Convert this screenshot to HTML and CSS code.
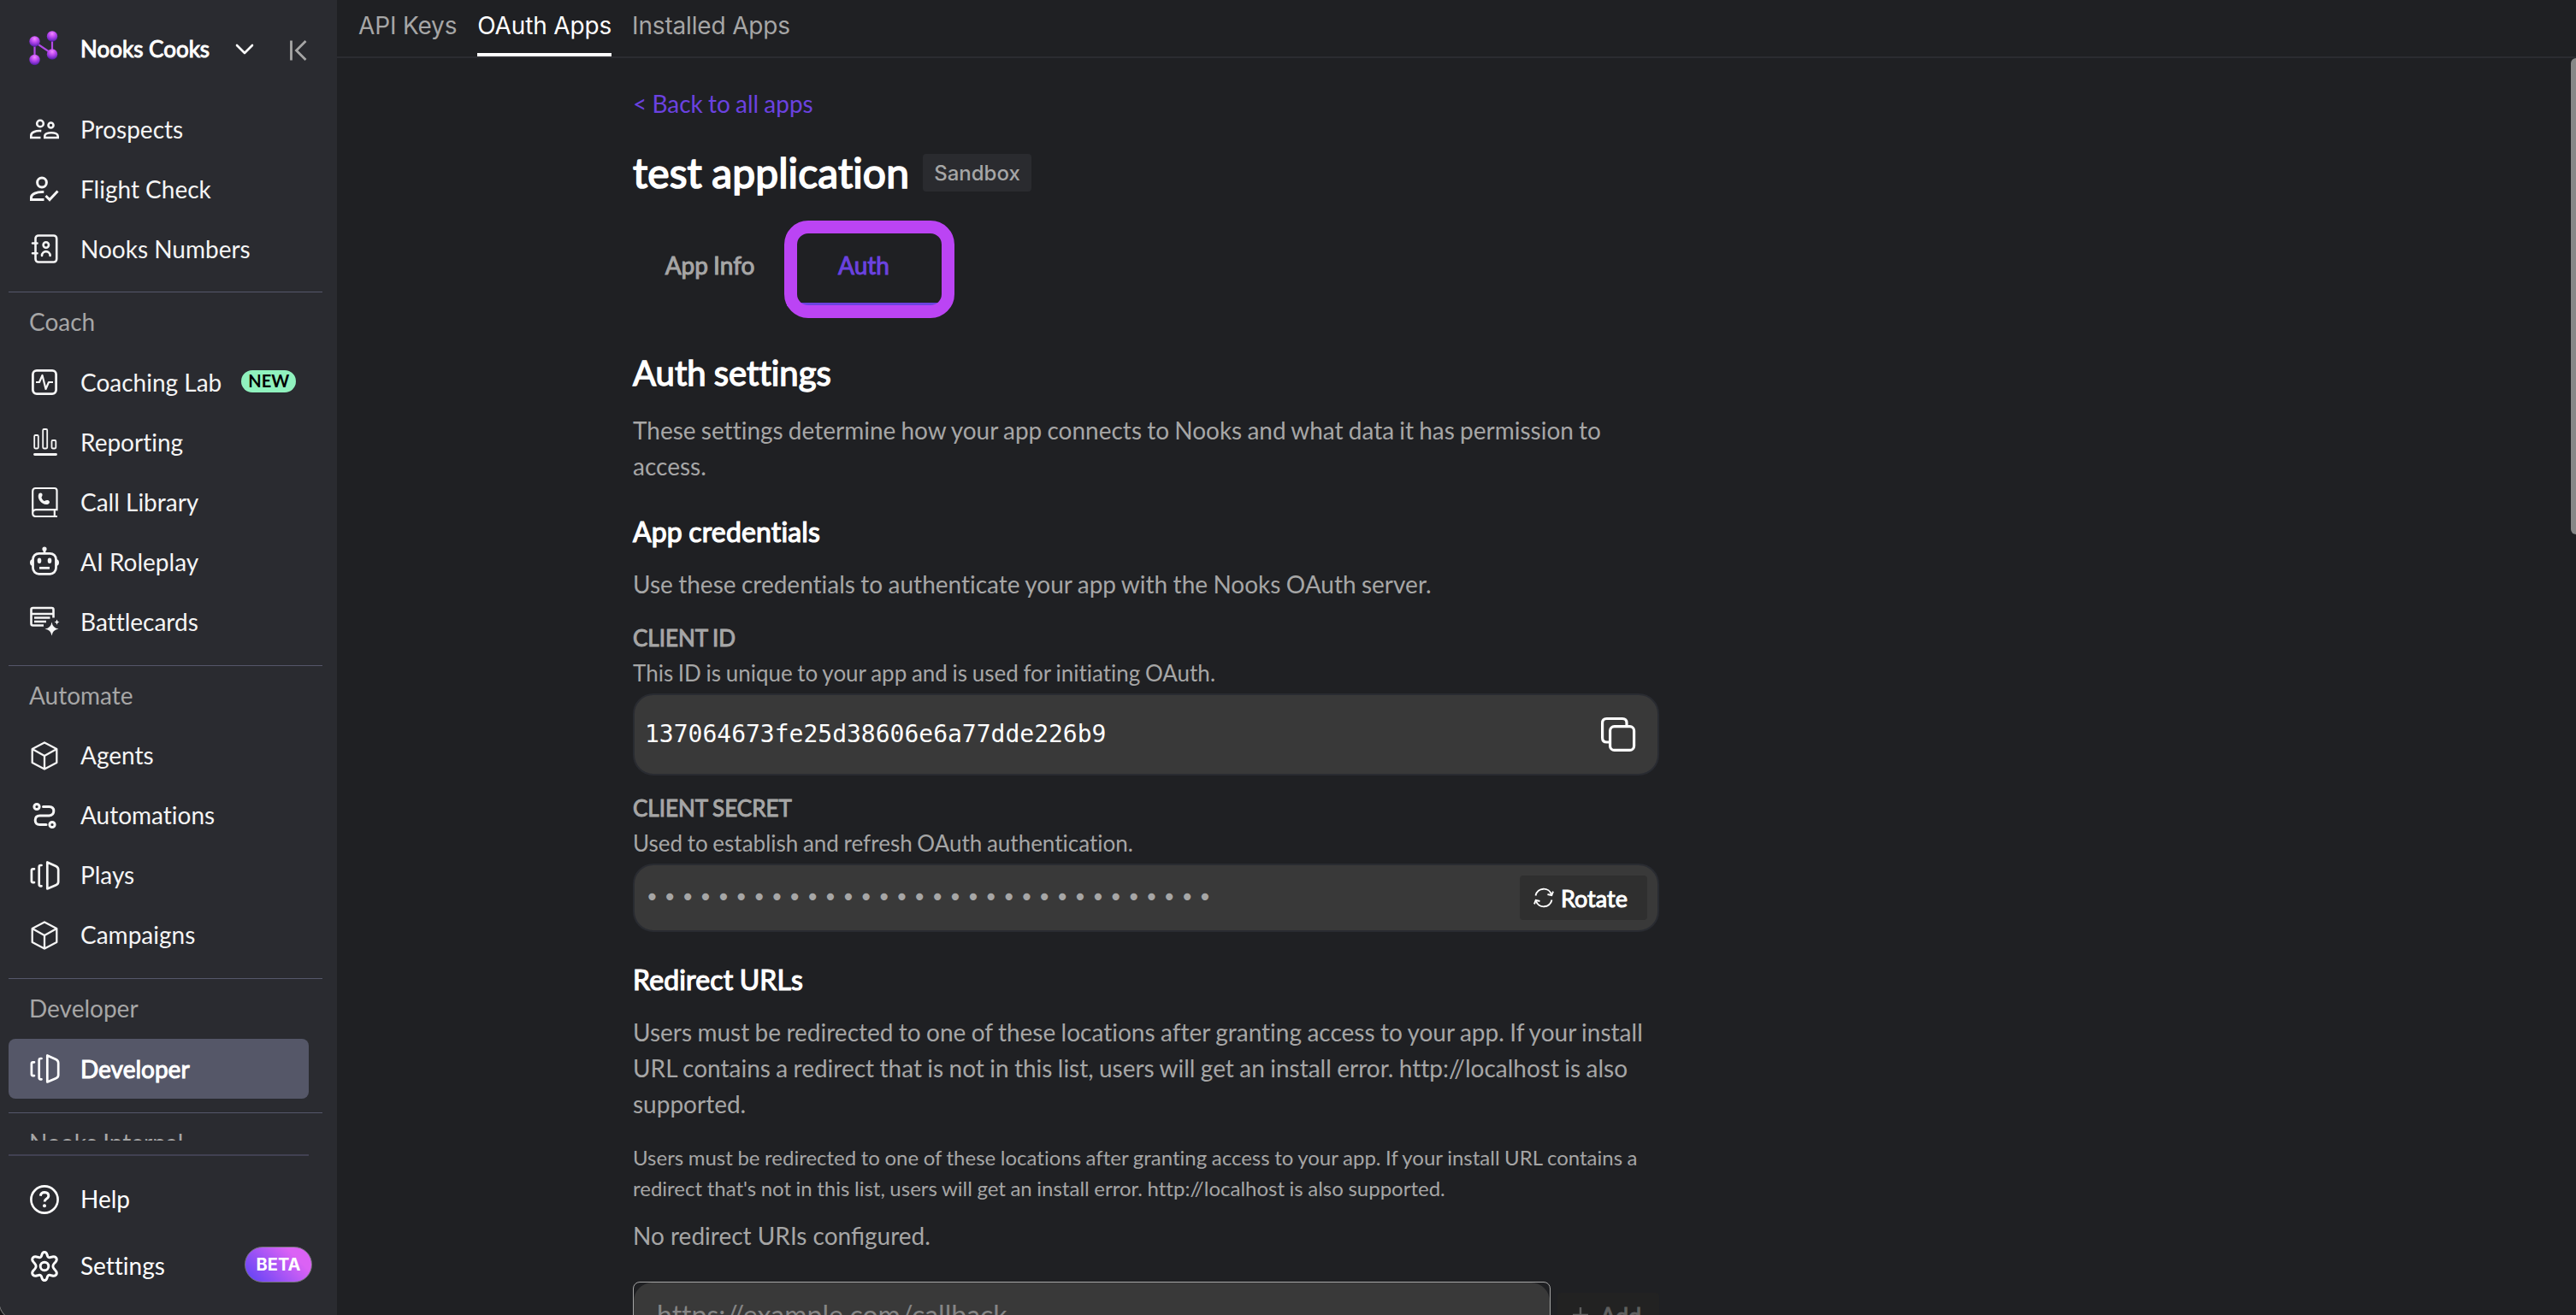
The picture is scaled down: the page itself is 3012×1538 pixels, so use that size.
FILE: index.html
```html
<!DOCTYPE html>
<html lang="en">
<head>
<meta charset="utf-8">
<title>Nooks – Developer</title>
<link rel="stylesheet" href="styles.css">
</head>
<body>
<svg width="0" height="0" class="defs" aria-hidden="true">
  <defs>
    <radialGradient id="ball" cx="0.5" cy="0.25" r="0.8">
      <stop offset="0" stop-color="#f08cff"/><stop offset="0.35" stop-color="#c650f4"/><stop offset="0.75" stop-color="#7a2cc8"/><stop offset="1" stop-color="#3a1580"/>
    </radialGradient>
    <symbol id="cube" viewBox="0 0 36 36"><path d="M18 2.500 32.300 10v16L18 33.500 3.700 26V10zM3.700 10 18 18l14.300-8M18 18v15.500" fill="none" stroke="currentColor" stroke-width="2.300" stroke-linejoin="round"/></symbol>
    <symbol id="plays" viewBox="0 0 36 36"><g fill="none" stroke="currentColor" stroke-width="2.700" stroke-linecap="round" stroke-linejoin="round"><path d="M21.300 2.500v31l10-4.300q2.900-1.200 2.900-4V11.200q0-2.800-2.900-4.200z"/><path d="M14.500 6h-1q-1.800 0-1.800 2v20.300q0 2 1.800 2h1M6 10.300H4.500q-1.600 0-1.600 1.800v12.200q0 1.800 1.600 1.800H6"/></g></symbol>
  </defs>
</svg>
<div class="app">
  <aside class="sidebar">
    <header class="brand">
      <svg class="logo" width="36" height="42" viewBox="0 0 36 42"><path d="M7.500 34V13L28 27V6" fill="none" stroke="#b14be6" stroke-width="2.200"/><circle cx="7.500" cy="12.500" r="6.200" fill="url(#ball)"/><circle cx="28" cy="6.500" r="6.200" fill="url(#ball)"/><circle cx="28" cy="27.500" r="6.200" fill="url(#ball)"/><circle cx="7.500" cy="34" r="6.200" fill="url(#ball)"/></svg>
      <span class="brand-name strong">Nooks Cooks</span>
      <svg class="chevron" width="24" height="16" viewBox="0 0 24 16"><path d="M3 3l9 9 9-9" fill="none" stroke="#fff" stroke-width="2.600" stroke-linecap="round" stroke-linejoin="round"/></svg>
      <svg class="collapse" width="22" height="26" viewBox="0 0 22 26"><path d="M3.500 1.500v23M20.500 2 9.500 13l11 11" fill="none" stroke="#a6a6a6" stroke-width="2.800"/></svg>
    </header>

    <nav class="nav">
      <a class="item"><svg class="icon" viewBox="0 0 36 36"><g fill="none" stroke="currentColor" stroke-width="2.600"><circle cx="13" cy="11.500" r="3.800"/><circle cx="25.500" cy="13.500" r="3"/><path d="M13.500 28H2.300v-2.500c0-3.500 5-6 12-5.400M18.300 28v-1.800c0-2.600 3.800-4 7.700-4s7.700 1.400 7.700 4V28z"/></g></svg>Prospects</a>
      <a class="item"><svg class="icon" viewBox="0 0 36 36"><g fill="none" stroke="currentColor" stroke-width="3"><circle cx="15" cy="10.500" r="5.400"/><path d="M17.500 30.500h-15v-2.500c0-4 6-6.800 14.800-6.400M19.500 26l4.500 4.500 9.500-10"/></g></svg>Flight Check</a>
      <a class="item"><svg class="icon" viewBox="0 0 36 36"><g fill="none" stroke="currentColor" stroke-width="2.600" stroke-linecap="round"><rect x="7.500" y="2.500" width="24.700" height="31" rx="3.500"/><path d="M4 11.500h5.500M4 23.300h5.500"/><circle cx="19.800" cy="13.500" r="3.200"/><path d="M15 26c0-6.500 9.600-6.500 9.600 0"/></g></svg>Nooks Numbers</a>
    </nav>

    <h3 class="group">Coach</h3>
    <nav class="nav">
      <a class="item"><svg class="icon" viewBox="0 0 36 36"><g fill="none" stroke="currentColor" stroke-width="2.800" stroke-linejoin="round"><rect x="4.400" y="4.400" width="27.200" height="27.200" rx="4.500"/><path stroke-width="2.200" d="M8 18h4l3.500-8 4 16 3.500-8h5"/></g></svg>Coaching Lab<span class="new strong">NEW</span></a>
      <a class="item"><svg class="icon" viewBox="0 0 36 36"><g fill="none" stroke="currentColor" stroke-width="1.800"><rect x="6.200" y="10" width="4.600" height="15.500" rx="1.200"/><rect x="16.200" y="3" width="5" height="22.500" rx="1.200"/><rect x="26.500" y="16" width="4.800" height="9.500" rx="1.200"/><path d="M6.500 32.500h25" stroke-width="2.800" stroke-linecap="round"/></g></svg>Reporting</a>
      <a class="item"><svg class="icon" viewBox="0 0 36 36"><g fill="none" stroke="currentColor" stroke-width="2.200"><path d="M4.200 31V5.500q0-3.500 3.500-3.500h22q2.800 0 2.800 2.800v22.400H8q-3.800.2-3.800 4t3.800 3.800h25M29.800 27v7"/></g><path d="M11.500 8.200c1.200-1.200 3-1 3.800.4.600 1.400.2 2.800-.8 3.800.3 2.200 1.700 3.900 3.600 4.600 1.300-1 3.100-1.500 4.600-.7 1.800 1 1.700 3-.1 4.100-5.800 2.900-14.600-5.800-11.100-12.200z" fill="currentColor"/></svg>Call Library</a>
      <a class="item"><svg class="icon" viewBox="0 0 36 36"><g fill="none" stroke="currentColor" stroke-width="2.800"><rect x="4.500" y="8.300" width="27" height="24" rx="7"/><path d="M18 8V4"/><path d="M12 25.300h12"/></g><g fill="currentColor"><circle cx="18" cy="3" r="2.600"/><ellipse cx="12" cy="16.800" rx="2.300" ry="3.200"/><ellipse cx="24" cy="16.800" rx="2.300" ry="3.200"/><path d="M4 15v8q-3-.6-3-4t3-4zM32 15v8q3-.6 3-4t-3-4z"/></g></svg>AI Roleplay</a>
      <a class="item"><svg class="icon" viewBox="0 0 36 36"><g fill="none" stroke="currentColor" stroke-width="2.600"><path d="M17 22.500H4.500q-2 0-2-2V4q0-2 2-2h22q2 0 2 2v9.500"/><path d="M2.500 9h26M6 13.500h18.500M6 18h14"/></g><path d="M26.500 18.500q1 7 8 8-7 1-8 8-1-7-8-8 7-1 8-8zM32.500 15.500q.4 2.700 3 3.100-2.600.4-3 3.100-.4-2.700-3-3.100 2.600-.4 3-3.100z" fill="currentColor"/></svg>Battlecards</a>
    </nav>

    <h3 class="group">Automate</h3>
    <nav class="nav">
      <a class="item"><svg class="icon"><use href="#cube"/></svg>Agents</a>
      <a class="item"><svg class="icon" viewBox="0 0 36 36"><g fill="none" stroke="currentColor" stroke-width="3" stroke-linecap="round"><circle cx="9" cy="7.500" r="3.100"/><circle cx="27" cy="28.500" r="3.100"/><path d="M16.500 7.500h7q5.300 0 5.300 5t-5.300 5.500H12.500q-5.300 0-5.300 5.300t5.300 5.200H20"/></g></svg>Automations</a>
      <a class="item"><svg class="icon"><use href="#plays"/></svg>Plays</a>
      <a class="item"><svg class="icon"><use href="#cube"/></svg>Campaigns</a>
    </nav>

    <h3 class="group">Developer</h3>
    <nav class="nav">
      <a class="item active strong"><svg class="icon"><use href="#plays"/></svg>Developer</a>
    </nav>

    <div class="clipped"><h3 class="group">Nooks Internal</h3></div>

    <footer class="side-footer">
      <a class="item help"><svg class="icon" viewBox="0 0 36 36"><circle cx="18" cy="18" r="15.600" fill="none" stroke="currentColor" stroke-width="2.600"/><path d="M13.300 13.800q.6-4.300 4.900-4.300 4.600.2 4.600 4 0 2.300-2.600 3.700-2 1.300-2 3.300" fill="none" stroke="currentColor" stroke-width="2.900"/><circle cx="18" cy="25.200" r="2" fill="currentColor"/></svg>Help</a>
      <a class="item settings"><svg class="icon gear" viewBox="0 0 36 40"><path d="M18 3.500q2.600 0 3.200 3.500l.6 1.600q.8 1.400 2.600 1.100l2.600-.7q3.200-1 4.700 1.100 1.500 2.400-.7 4.800l-1.800 2q-1.300 1.400-1.300 3.100t1.300 3.100l1.800 2q2.200 2.400.7 4.800-1.500 2.100-4.700 1.100l-2.600-.7q-1.800-.3-2.600 1.100l-.6 1.600q-.6 3.500-3.200 3.500t-3.200-3.500l-.6-1.600q-.8-1.400-2.600-1.100l-2.600.7q-3.200 1-4.700-1.100-1.500-2.400.7-4.800l1.800-2q1.300-1.400 1.300-3.100t-1.300-3.100l-1.800-2q-2.200-2.400-.7-4.800 1.500-2.100 4.700-1.100l2.600.7q1.800.3 2.600-1.100l.6-1.600q.6-3.500 3.200-3.500z" fill="none" stroke="currentColor" stroke-width="2.900"/><circle cx="18" cy="20" r="4.800" fill="none" stroke="currentColor" stroke-width="2.900"/></svg>Settings<span class="beta">BETA</span></a>
    </footer>
  </aside>

  <main class="main">
    <nav class="tabs">
      <a class="tab">API Keys</a>
      <a class="tab selected">OAuth Apps</a>
      <a class="tab">Installed Apps</a>
    </nav>
    <div class="scroller">
      <div class="thumb"></div>
      <section class="content">
        <a class="back">&lt; Back to all apps</a>
        <div class="title-row"><h1>test application</h1><span class="chip">Sandbox</span></div>
        <div class="subtabs">
          <a class="subtab strong">App Info</a>
          <a class="subtab strong on">Auth<span class="marker"></span></a>
        </div>
        <h2>Auth settings</h2>
        <p class="lead">These settings determine how your app connects to Nooks and what data it has permission to access.</p>
        <h4>App credentials</h4>
        <p class="text">Use these credentials to authenticate your app with the Nooks OAuth server.</p>
        <div class="label strong">CLIENT ID</div>
        <p class="hint">This ID is unique to your app and is used for initiating OAuth.</p>
        <div class="field id-field">
          <code>137064673fe25d38606e6a77dde226b9</code>
          <svg width="42" height="42" viewBox="0 0 42 42"><g fill="none" stroke="#fff" stroke-width="3.200"><rect x="10.600" y="11.600" width="28" height="27.800" rx="5"/><path d="M30 11V7.500q0-5-5-5H6.600q-5 0-5 5V25q0 5 5 5h4"/></g></svg>
        </div>
        <div class="label strong second">CLIENT SECRET</div>
        <p class="hint">Used to establish and refresh OAuth authentication.</p>
        <div class="field secret-field">
          <code class="dots">••••••••••••••••••••••••••••••••</code>
          <button class="rotate strong"><svg width="24" height="24" viewBox="0 0 24 24"><g fill="none" stroke="#fff" stroke-width="1.900"><path d="M2.500 9.500C4.500-.500 18.500-1 21 8.500M21.500 14.500C19.500 24.500 5.500 25 3 15.500"/><path d="M16.500 8l4.800 1.200 1.700-4.500M7.500 16l-4.800-1.200L1 19.300"/></g></svg>Rotate</button>
        </div>
        <h4>Redirect URLs</h4>
        <p class="text">Users must be redirected to one of these locations after granting access to your app. If your install URL contains a redirect that is not in this list, users will get an install error. http://localhost is also supported.</p>
        <p class="small">Users must be redirected to one of these locations after granting access to your app. If your install URL contains a redirect that's not in this list, users will get an install error. http://localhost is also supported.</p>
        <p class="none">No redirect URIs configured.</p>
        <div class="add-row">
          <div class="input"><span class="placeholder">https://example.com/callback</span></div>
          <button class="add strong"><svg width="18" height="18" viewBox="0 0 18 18"><path d="M9 0v18M0 9h18" stroke="#5f5f5f" stroke-width="2.400"/></svg>Add</button>
        </div>
      </section>
    </div>
  </main>
</div>
</body>
</html>
```
FILE: styles.css
```css
* { box-sizing: border-box; }
body { margin: 0; background: #1f2023; color: #fff; font-family: Lato, sans-serif; font-size: 28px; font-variant-ligatures: no-common-ligatures; }
h1, h2, h3, h4, p { margin: 0; font-size: 28px; font-weight: 400; }
.defs { position: absolute; }
.strong { -webkit-text-stroke: 1px currentColor; }
.app { display: flex; width: 3012px; height: 1538px; overflow: hidden; }

/* Sidebar */
.sidebar { position: relative; display: flex; flex-direction: column; width: 394px; flex: none; background: #2a2b30; }
.sidebar::after { content: ""; position: absolute; left: 0; bottom: 0; width: 6px; height: 10px; background: radial-gradient(circle at 20px -5px, transparent 20px, #777 20.800px, #151517 22px); }
.brand { display: flex; align-items: center; height: 116px; padding: 0 0 3px 33px; }
.logo { margin-right: 25px; }
.brand-name { width: 149px; font-size: 26px; white-space: nowrap; }
.chevron { margin-left: 31px; margin-top: 3px; }
.collapse { margin-left: 39px; margin-top: 5px; }
.nav { padding-left: 10px; }
.item { display: flex; align-items: center; width: 351px; height: 70px; padding: 0 0 1px 24px; border-radius: 8px; color: #f5f5f5; white-space: nowrap; }
.icon { width: 36px; height: 36px; margin: 1px 24px 0 0; flex: none; }
.active { background: #555768; color: #fff; }
.group { height: 71px; margin: 15.400px 17px 0 10px; padding: 0 24px; border-top: 1px solid #55576a; line-height: 69px; color: #a6a6a6; }
.new { margin: 0 0 1px 23px; width: 64px; height: 26px; border-radius: 13px; background: #90f2be; color: #000; font-size: 20px; font-weight: 700; line-height: 25px; text-align: center; -webkit-text-stroke: 0; }
.clipped { height: 48.600px; overflow: hidden; display: flow-root; }
.side-footer { margin: 16px 0 0 10px; width: 351px; border-top: 2px solid #414152; padding-top: 16px; }
.side-footer .item { color: #fff; }
.settings { margin-top: 8px; }
.gear { height: 40px; }
.beta { margin: 0 -4px 2px auto; width: 79px; height: 42px; border: 1px solid #77717d; border-radius: 21px; background: linear-gradient(45deg, #5b42f5, #db62f5 75%); font: 700 20px/40px Inter, sans-serif; text-align: center; flex: none; }

/* Main area */
.main { flex: 1; min-width: 0; display: flex; flex-direction: column; }
.tabs { display: flex; gap: 24px; height: 68px; padding-left: 25px; border-bottom: 2px solid #2b2c31; font-family: Inter, sans-serif; letter-spacing: -.16px; color: #a6a6a6; }
.tab { height: 66px; line-height: 60px; white-space: nowrap; }
.selected { color: #fff; border-bottom: 4px solid #fff; }
.scroller { position: relative; flex: 1; overflow: hidden; }
.thumb { position: absolute; top: 0; right: 0; width: 6px; height: 557px; border-radius: 6px 0 0 6px; background: #878787; }
.content { width: 1200px; margin-left: 346px; color: #a6a6a6; line-height: 42px; word-spacing: -1px; }
.back { display: block; margin-top: 32px; color: #6b42e0; }
.title-row { display: flex; align-items: center; margin-top: 30px; height: 60px; }
h1, h2, h4 { color: #fff; white-space: nowrap; }
h1 { width: 322px; font-size: 48px; letter-spacing: .1px; -webkit-text-stroke: 1.700px currentColor; }
.chip { margin-left: 17px; width: 127px; height: 44px; border-radius: 4px; background: #2a2b2f; font: 500 24px/45px Inter, sans-serif; text-align: center; }
.subtabs { display: flex; margin-top: 42px; height: 84px; }
.subtab { position: relative; width: 180px; height: 84px; line-height: 72px; text-align: center; }
.on { color: #6b42e0; border-bottom: 4px solid #6b42e0; }
.marker { position: absolute; left: -3px; top: -16px; width: 199px; height: 114px; border: 15px solid #bb44f4; border-radius: 28px; }
h2 { margin-top: 48px; font-size: 40px; line-height: 60px; -webkit-text-stroke: 1.400px currentColor; }
.lead { margin-top: 16px; }
h4 { margin-top: 32px; font-size: 32px; line-height: 48px; letter-spacing: .15px; -webkit-text-stroke: 1.200px currentColor; }
.text { margin-top: 16px; word-spacing: -.8px; }
.label { margin-top: 24px; font-size: 26px; line-height: 36px; }
.second { margin-top: 20px; }
.hint { margin: 4px 0; font-size: 26px; line-height: 39px; }
.field { display: flex; align-items: center; justify-content: space-between; background: #393939; border: 2px solid #292b31; border-radius: 24px; }
.field code { font: 28px/40px "DejaVu Sans Mono", monospace; color: #fff; }
.id-field { height: 96px; padding: 0 24px 0 12px; }
.secret-field { height: 80px; padding: 0 12px 0 12px; }
.field .dots { color: #a6a6a6; letter-spacing: 4px; }
.rotate { display: flex; align-items: center; gap: 8px; width: 149px; height: 52px; padding: 0 0 0 16px; border: 0; border-radius: 4px; background: #2f2f2f; color: #fff; font: 27px Lato, sans-serif; }
.small { margin-top: 24px; font-size: 24px; line-height: 36px; word-spacing: -.6px; }
.none { margin-top: 16px; font-variant-ligatures: normal; word-spacing: 0; }
.add-row { display: flex; gap: 8px; margin-top: 33px; height: 78px; align-items: center; }
.input { width: 1073px; height: 78px; border: 1px solid #a6a6a6; border-radius: 8px; }
.placeholder { display: block; height: 76px; padding: 0 27px; border-radius: 22px; background: #393939; color: #858585; font-size: 32px; line-height: 76px; word-spacing: 0; }
.add { width: 119px; height: 52px; display: flex; align-items: center; gap: 14px; padding: 0 0 0 18px; border: 0; border-radius: 4px; background: #222; color: #5f5f5f; font: 27px Lato, sans-serif; }
```
